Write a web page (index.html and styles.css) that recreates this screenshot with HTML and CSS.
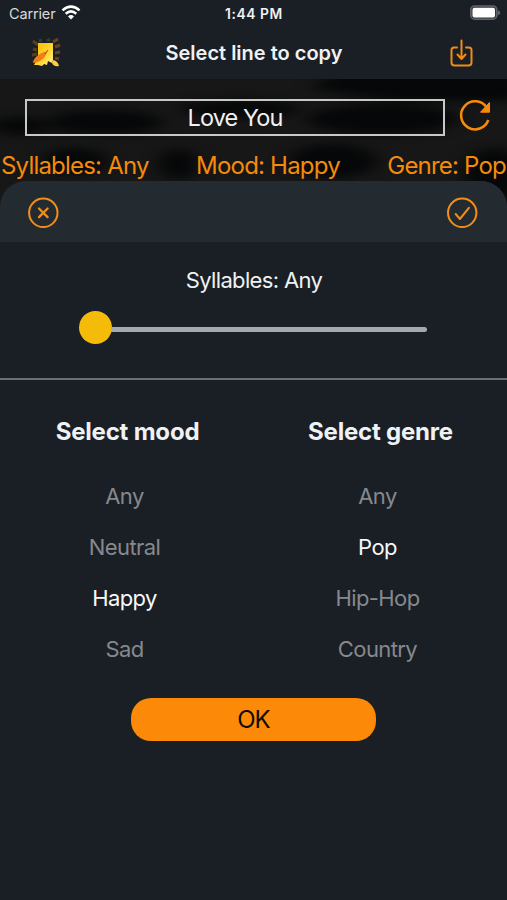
FILE: index.html
```html
<!DOCTYPE html>
<html lang="en">
<head>
<meta charset="utf-8">
<title>Select line to copy</title>
<link rel="stylesheet" href="styles.css">
</head>
<body>
<div class="screen">
  <header class="status">
    <div class="carrier"><span>Carrier</span>
      <svg width="20" height="15" viewBox="0 0 20 15" fill="none" stroke="#fff" stroke-width="2.5"><path d="M1.500 5.400Q10-2.200 18.500 5.400M4.700 8.700Q10 4.100 15.300 8.700"/><path d="M7 11.400Q10 8.600 13 11.400L10 14.500Z" fill="#fff" stroke="none"/></svg>
    </div>
    <span class="clock">1:44 PM</span>
    <svg class="battery" width="32" height="16" viewBox="0 0 32 16"><rect x="1.800" y="1" width="26" height="13.200" rx="4" fill="#303439" stroke="#626569" stroke-width="1.6"/><rect x="3.500" y="2.800" width="22.500" height="9.600" rx="2" fill="#fff"/><path d="M29 5.200Q31.300 6 31.300 7.700T29 10.200Z" fill="#626569"/></svg>
  </header>
  <nav class="nav">
    <svg class="logo" width="32" height="32" viewBox="0 0 32 32">
      <defs><linearGradient id="gold" x2="1" y2="1"><stop stop-color="#f5b800"/><stop offset=".6" stop-color="#ffd735"/><stop offset="1" stop-color="#fff49b"/></linearGradient><filter id="smooth"><feGaussianBlur stdDeviation=".7"/></filter></defs>
      <g filter="url(#smooth)">
      <g fill="none" stroke-width="3"><path d="M3 4l5 4M3 12l4 1M2 18l5-1M3 25l5-3" stroke="#57401f"/><path d="M23 5l5-3M25 10l5-2M25 16l5-1M25 21l4 1" stroke="#6b4020"/><path d="M9 4l3-1M17 4l3-2" stroke="#3d3828"/></g>
      <path d="M8 6h15v17l-1 3-4-2-1 4-3-1-2 2-4-1h-4l4-7Z" fill="url(#gold)"/>
      <path d="M3 26q1-6 7-9 5-3 7-2-2 7-9 10Z" fill="#f07d16"/><path d="M15 17l3-4" stroke="#8c5a0b"/>
      <path d="M23 23q5 1 6 6-5 1-7-3Z" fill="#ffcf3a"/>
      </g>
    </svg>
    <h1>Select line to copy</h1>
    <svg class="save" width="26" height="30" viewBox="0 0 26 30" fill="none" stroke="#f08b18" stroke-width="2" stroke-linecap="round" stroke-linejoin="round"><path d="M8 8.500H5Q2.500 8.500 2.500 11V23.500Q2.500 26.500 5.500 26.500H19.500Q22.500 26.500 22.500 23.500V11Q22.500 8.500 20 8.500H17M12.500 1.500V20M8.500 15.500L12.500 20 16.500 15.500"/></svg>
  </nav>
  <main class="content">
    <svg class="texture" width="507" height="130" viewBox="0 0 507 130" preserveAspectRatio="none">
      <defs><filter id="soft" x="-20%" y="-50%" width="140%" height="200%" color-interpolation-filters="sRGB"><feGaussianBlur stdDeviation="9 5"/></filter></defs>
      <rect width="507" height="130" fill="#171717"/>
      <g fill="#060708" filter="url(#soft)"><path d="M340 -10H520V22H400L310 10Z"/><ellipse cx="20" cy="47" rx="29" ry="9"/><ellipse cx="105" cy="43" rx="58" ry="12"/><ellipse cx="240" cy="30" rx="60" ry="9"/><ellipse cx="382" cy="40" rx="75" ry="15"/><ellipse cx="75" cy="82" rx="32" ry="13"/><ellipse cx="178" cy="85" rx="20" ry="15"/><ellipse cx="333" cy="82" rx="44" ry="17"/><ellipse cx="495" cy="95" rx="30" ry="26"/></g>
    </svg>
    <div class="line-row">
      <div class="line"><span>Love You</span></div>
      <svg width="36" height="36" viewBox="0 0 36 36"><path d="M28.500 9.200A14 14 0 1 0 30.300 22" fill="none" stroke="#f98a09" stroke-width="2.500"/><path d="M31.500 4.500V14.200H22.500Z" fill="#f98a09" stroke="#f98a09" stroke-linejoin="round"/></svg>
    </div>
    <div class="filters"><span>Syllables: Any</span><span>Mood: Happy</span><span>Genre: Pop</span></div>
  </main>
  <section class="sheet">
    <div class="sheet-bar">
      <svg width="32" height="32" viewBox="0 0 32 32" fill="none" stroke="#f18d1b" stroke-width="2"><circle cx="16.300" cy="15.800" r="14.200"/><path d="M12 11.500l8.600 8.600M20.600 11.500l-8.600 8.600" stroke-width="2.300" stroke-linecap="round"/></svg>
      <svg width="32" height="32" viewBox="0 0 32 32" fill="none" stroke="#f18d1b" stroke-width="2"><circle cx="16.200" cy="15.800" r="14.200"/><path d="M9.700 17l4.200 5 9-11.200" stroke-linecap="round" stroke-linejoin="round"/></svg>
    </div>
    <div class="syllables"><span>Syllables: Any</span><div class="slider"><i class="knob"></i><i class="track"></i></div></div>
    <div class="choices">
      <div class="column"><h2>Select mood</h2><span>Any</span><span>Neutral</span><span class="on">Happy</span><span>Sad</span></div>
      <div class="column"><h2>Select genre</h2><span>Any</span><span class="on">Pop</span><span>Hip-Hop</span><span>Country</span></div>
    </div>
    <button class="ok">OK</button>
  </section>
</div>
</body>
</html>
```
FILE: styles.css
```css
* { box-sizing: border-box; }
body { margin: 0; background: #1a1f26; font-family: Inter, "Liberation Sans", sans-serif; }
.screen { width: 507px; height: 900px; overflow: hidden; display: flex; flex-direction: column; background: #1a1f26; color: #f0f1f2; }
span, h1, h2 { white-space: nowrap; }
.status { height: 27px; flex: none; display: grid; grid-template-columns: 1fr auto 1fr; align-items: center; padding: 0 6px 0 9px; }
.carrier { display: flex; align-items: center; gap: 6px; font-size: 14.5px; letter-spacing: -.15px; color: #d8dadb; }
.carrier svg { margin-top: -2px; }
.clock { font-size: 13.8px; font-weight: 600; letter-spacing: .6px; margin-right: 2px; }
.battery { justify-self: end; margin-top: -1px; }
.nav { height: 52px; flex: none; display: grid; grid-template-columns: 1fr auto 1fr; align-items: center; padding: 0 32px 0 30px; }
.nav h1 { margin: 0 -3px 0 0; font-size: 20px; font-weight: 600; letter-spacing: 0; line-height: 24px; padding-bottom: 1px; }
.save { justify-self: end; margin-top: 1px; }
.content { height: 102px; flex: none; position: relative; padding-top: 19px; }
.texture { position: absolute; top: 0; left: 0; }
.line-row { position: relative; display: flex; align-items: center; gap: 13px; padding-left: 25px; height: 38px; }
.line-row svg { margin-top: -2px; }
.line { width: 420px; height: 37px; border: 2px solid #c8c8c8; display: flex; align-items: center; justify-content: center; font-size: 23.5px; letter-spacing: -.9px; }
.filters { position: relative; display: flex; justify-content: space-between; padding: 0 1px; margin-top: 15px; line-height: 30px; color: #f58a0b; font-size: 24px; letter-spacing: -.8px; }
.sheet { flex: 1; position: relative; display: flex; flex-direction: column; align-items: center; background: #1a1f26; border-radius: 26px 26px 0 0; overflow: hidden; }
.sheet-bar { width: 100%; height: 61px; flex: none; display: flex; align-items: center; justify-content: space-between; padding: 3px 29px 0 27px; background: #232b30; }
.syllables { width: 100%; height: 138px; flex: none; border-bottom: 2px solid #6b6f72; padding-top: 24px; display: flex; flex-direction: column; align-items: center; font-size: 22px; letter-spacing: -.65px; line-height: 28px; }
.syllables span { margin-right: -1px; }
.slider { width: 349px; height: 33px; margin-top: 17px; display: flex; align-items: center; }
.knob { width: 33px; height: 33px; flex: none; border-radius: 50%; background: #f4bc08; }
.track { flex: 1; height: 5px; margin: 3px 1px 0 -1px; border-radius: 0 3px 3px 0; background: #a5a9ac; }
.choices { display: grid; grid-template-columns: 253px 253px; height: 318px; flex: none; padding-top: 35px; }
.column { display: grid; grid-template-rows: 34px 61px 51px 51px 51px; justify-items: center; align-content: start; padding-right: 5px; }
.column h2 { margin: 0 -6px 0 0; font-size: 24px; font-weight: 650; line-height: 34px; letter-spacing: -.2px; }
.column span { align-self: end; font-size: 22px; line-height: 28px; letter-spacing: -.6px; color: #86898c; }
.column .on { color: #f7f8f9; }
.ok { width: 245px; height: 43px; flex: none; border: 0; border-radius: 20px; background: #fc8a08; color: #100a04; font: 24px Inter, sans-serif; letter-spacing: -.9px; padding: 0; }
```
